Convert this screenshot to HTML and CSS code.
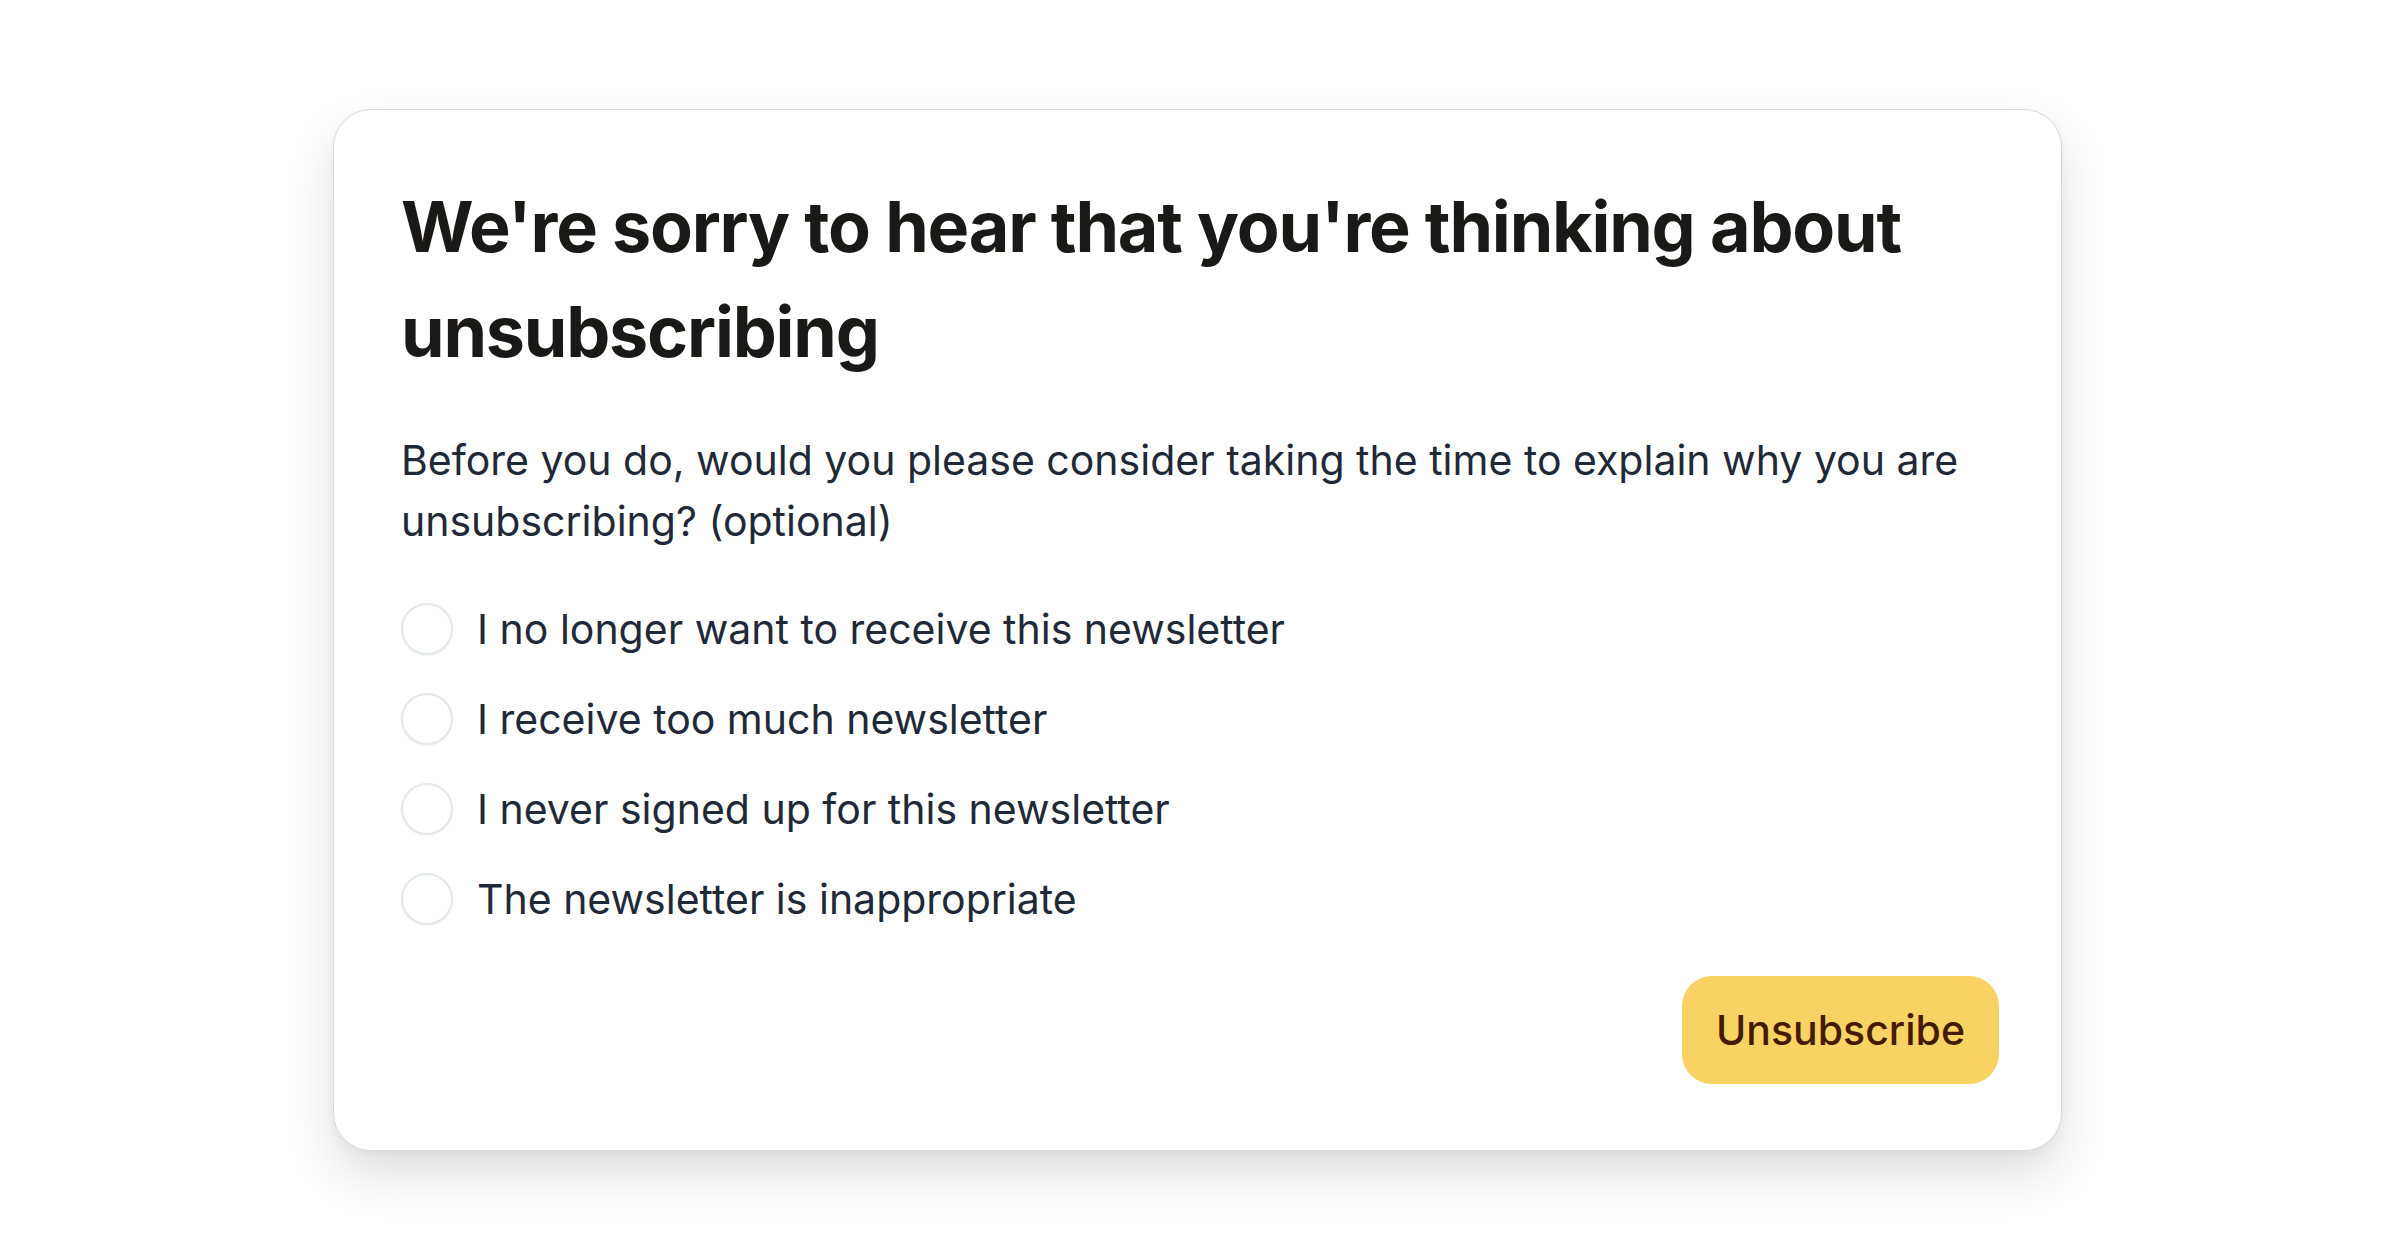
FILE: index.html
```html
<!DOCTYPE html>
<html lang="en">
<head>
<meta charset="utf-8">
<title>Unsubscribe</title>
<link rel="stylesheet" href="styles.css">
</head>
<body>
<main class="page">
  <form class="card">
    <h1 class="title">We're sorry to hear that you're thinking about unsubscribing</h1>
    <p class="intro">Before you do, would you please consider taking the time to explain why you are unsubscribing? (optional)</p>
    <ul class="options">
      <li class="option"><span class="radio"></span><span class="label">I no longer want to receive this newsletter</span></li>
      <li class="option"><span class="radio"></span><span class="label">I receive too much newsletter</span></li>
      <li class="option"><span class="radio"></span><span class="label">I never signed up for this newsletter</span></li>
      <li class="option"><span class="radio"></span><span class="label">The newsletter is inappropriate</span></li>
    </ul>
    <div class="actions">
      <button type="button" class="btn">Unsubscribe</button>
    </div>
  </form>
</main>
</body>
</html>
```

FILE: styles.css
```css
* { box-sizing: border-box; }
html, body { margin: 0; padding: 0; background: #ffffff; }
body { font-family: Inter, "Noto Sans", sans-serif; color: #1f2937; }

.page {
  min-height: 100vh;
  display: flex;
  align-items: center;
  justify-content: center;
  padding-right: 5px;
}

.card {
  width: 1729px;
  height: 1042px;
  background: #fff;
  border: 1.5px solid #d9d9d9;
  border-radius: 38px;
  padding: 64px 62px 66px 67px;
  box-shadow: 0 24px 50px rgba(0,0,0,0.13), 0 4px 10px rgba(0,0,0,0.04);
  display: flex;
  flex-direction: column;
}

.title {
  margin: 0;
  font-family: Inter, sans-serif;
  font-weight: 700;
  font-size: 70px;
  line-height: 105px;
  color: #1a1917;
  letter-spacing: -1.2px;
}

.intro {
  margin: 46px 0 0;
  font-size: 41px;
  line-height: 61px;
  color: #1f2937;
}

.options {
  list-style: none;
  margin: 47px 0 0;
  padding: 0;
  display: flex;
  flex-direction: column;
  gap: 30px;
}

.option {
  display: flex;
  align-items: center;
  gap: 24px;
  height: 60px;
}

.radio {
  width: 52px;
  height: 52px;
  border-radius: 50%;
  border: 2px solid #e5e7eb;
  box-shadow: 0 1px 2px rgba(0,0,0,0.05);
  flex: none;
}

.label {
  font-size: 41px;
  line-height: 60px;
  color: #1f2937;
}

.actions {
  margin-top: auto;
  display: flex;
  justify-content: flex-end;
}

.btn {
  font-family: Inter, sans-serif;
  font-size: 41px;
  font-weight: 500;
  color: #451a03;
  background: #f8d262;
  border: none;
  border-radius: 30px;
  width: 317px;
  height: 108px;
  padding: 0;
}
```
